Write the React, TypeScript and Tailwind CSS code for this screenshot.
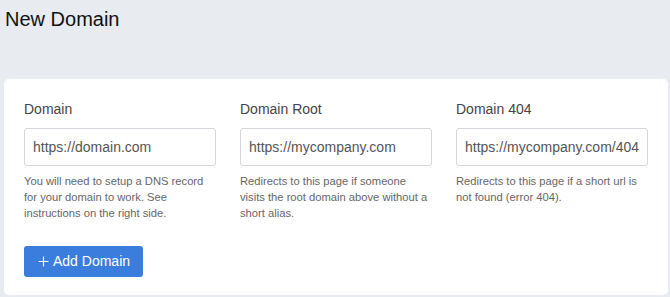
import React from 'react';

const fields = [
  {
    label: 'Domain',
    placeholder: 'https://domain.com',
    help: 'You will need to setup a DNS record for your domain to work. See instructions on the right side.',
  },
  {
    label: 'Domain Root',
    placeholder: 'https://mycompany.com',
    help: 'Redirects to this page if someone visits the root domain above without a short alias.',
  },
  {
    label: 'Domain 404',
    placeholder: 'https://mycompany.com/404',
    help: 'Redirects to this page if a short url is not found (error 404).',
  },
];

const App: React.FC = () => {
  return (
    <div className="min-h-[297px] bg-[#e8ebf0] font-['Liberation_Sans',Arial,sans-serif]">
      <h1 className="px-[5px] pt-[7px] text-[20px] leading-[24px] text-[#111]">New Domain</h1>

      <div className="ml-[4px] mr-[2px] mt-[48px] rounded-[5px] bg-white px-[20px] pt-[22px] pb-[18px]">
        <div className="flex gap-[24px]">
          {fields.map((f) => (
            <div key={f.label} className="w-[192px] shrink-0">
              <label className="block text-[14px] leading-[16px] text-[#444]">{f.label}</label>
              <input
                className="mt-[11px] block h-[38px] w-full rounded-[3px] border border-[#d3d6db] px-[8px] text-[14px] text-[#333] placeholder:text-[#555] outline-none"
                placeholder={f.placeholder}
              />
              <p className="mt-[7px] text-[11.2px] leading-[16px] text-[#666]">{f.help}</p>
            </div>
          ))}
        </div>

        <button className="mt-[25px] flex h-[31px] items-center gap-[4px] rounded-[3px] bg-[#3b7ddd] pl-[14px] pr-[13px] text-[14px] text-white">
          <svg width="11" height="11" viewBox="0 0 11 11" fill="none" stroke="currentColor" strokeWidth="1.2">
            <path d="M5.5 0.5v10M0.5 5.5h10" />
          </svg>
          Add Domain
        </button>
      </div>
    </div>
  );
};

export default App;
